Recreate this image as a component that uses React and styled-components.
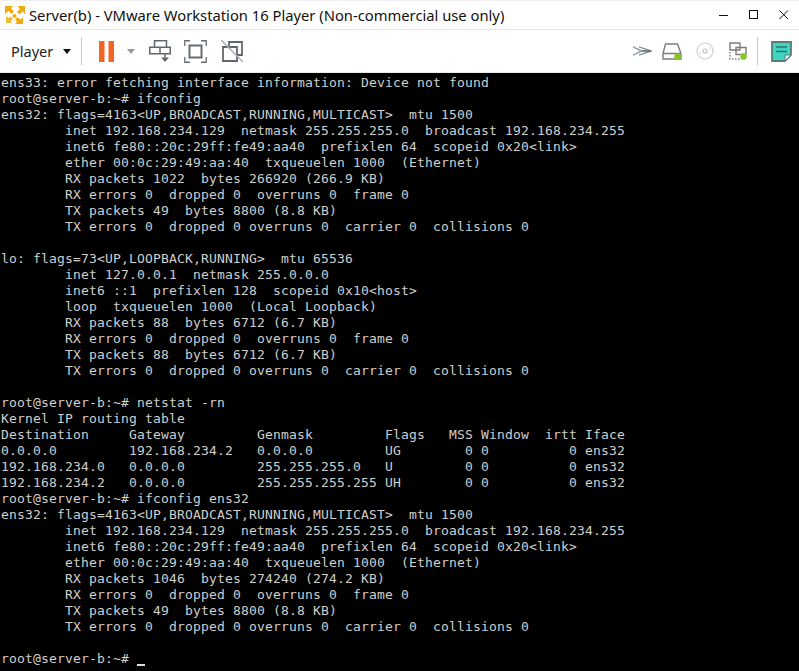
import React from "react";
import styled, { createGlobalStyle } from "styled-components";

const Global = createGlobalStyle`
  html, body { margin: 0; padding: 0; background: #fff; }
  #root { width: 799px; height: 671px; overflow: hidden; }
`;
const Shell = styled.div`
  width: 799px; height: 671px; display: flex; flex-direction: column; background: #fff; overflow: hidden;
`;
const TitleBar = styled.header`
  flex: none; display: flex; align-items: center; padding-left: 5px;
  border-top: 1px solid #f0eeee; box-sizing: border-box; border-bottom: 1px solid #e6e6e6; height: 30px;
`;
const Title = styled.div`
  margin-left: 4px; font: 14.76px/20px "Noto Sans", sans-serif; color: #111; white-space: nowrap; flex: 1;
`;
const WinButtons = styled.div`
  display: flex; align-items: center;
`;
const WinButton = styled.div`
  width: 30px; height: 28px; display: flex; align-items: center; justify-content: center;
`;
const Toolbar = styled.nav`
  height: 43px; flex: none; display: flex; align-items: center; box-sizing: border-box;
  border-bottom: 1px solid #e8e8e8; padding-right: 7px;
`;
const PlayerMenu = styled.div`
  display: flex; align-items: center; padding-left: 11px; width: 81px; box-sizing: border-box;
  font: 14.5px/20px "Noto Sans", sans-serif; color: #222; gap: 10px;
`;
const Caret = styled.span`
  width: 0; height: 0; border-left: 4.5px solid transparent; border-right: 4.5px solid transparent;
  border-top: 5px solid ${p => p.$color};
  margin-left: ${p => p.$left || 0}px;
`;
const Divider = styled.span`
  width: 1px; height: 28px; background: #c8c8c8; flex: none; margin-left: ${p => p.$left || 0}px;
`;
const ToolSlot = styled.div`
  display: flex; align-items: center; flex: none; margin-left: ${p => p.$left || 0}px;
`;
const Spacer = styled.div`flex: 1;`;
const Terminal = styled.pre`
  margin: 0; flex: 1; background: #000; color: #cfcfcf; padding: 2px 0 0 1px;
  font: 13px/16px "DejaVu Sans Mono", monospace; letter-spacing: 0.174px; overflow: hidden;
`;
const Cursor = styled.span`
  display: inline-block; width: 8px; height: 2px; background: #e0e0e0; vertical-align: -3px;
`;

const Logo = () => (
  <svg width="20" height="20" viewBox="0 0 20 20" fill="#eeaa14">
    <path d="M0 1h8L6 3.200l3 3L6.500 9l-3-3L0 9z" />
    <path d="M20 1v8l-2.500-2.500-3 3L12 7l3-3-2.500-3z" />
    <path d="M7 11l2.500-2.500 2.500 2.500-2.500 2.500z" />
    <path d="M18 19h-8l2-2-2-2.500 2.500-2.500 2.500 2.500 3-2z" />
    <path d="M1 11l2.500 2L6 11.500 8 14l-2.500 2 1.500 2H1z" opacity=".85" />
  </svg>
);
const Min = () => <svg width="10" height="10" viewBox="0 0 10 10"><path d="M0 5.500h9" stroke="#111" /></svg>;
const Max = () => <svg width="10" height="10" viewBox="0 0 10 10"><rect x=".5" y=".5" width="8" height="8" fill="none" stroke="#111" /></svg>;
const Close = () => <svg width="10" height="10" viewBox="0 0 10 10"><path d="M.5.500l8.500 8.500M9 .5L.5 9" stroke="#111" fill="none" /></svg>;
const Pause = () => (
  <svg width="15" height="21" viewBox="0 0 15 21"><path d="M0 0h5.500v21H0zM9.500 0H15v21H9.500z" fill="#f26522" /></svg>
);
const SendKeys = () => (
  <svg width="22" height="23" viewBox="0 0 22 23" fill="none" stroke="#5f666d" strokeWidth="1.500">
    <path d="M5.500 .75h12v6.500h-12zM.75 7.250h20.500v6.500H.75zM11 7.250v6.500" />
    <path d="M16 13.750v4" />
    <path d="M12 17.500h8L16 22z" fill="#5f666d" stroke="none" />
  </svg>
);
const FullScreen = () => (
  <svg width="23" height="23" viewBox="0 0 23 23" fill="none" stroke="#666d73">
    <path d="M.75 6V.75H6M17 .75h5.250V6M22.250 17v5.250H17M6 22.250H.75V17" strokeWidth="1.300" />
    <rect x="5.500" y="5.500" width="12" height="12" strokeWidth="2" />
  </svg>
);
const Unity = () => (
  <svg width="22" height="22" viewBox="0 0 22 22" fill="none" stroke="#5f666d" strokeWidth="1.800">
    <path d="M8 7V2h13v13h-5" />
    <path d="M2 7h14v14H2z" />
    <path d="M0 0l22 22" stroke="#a9aeb3" strokeWidth="1.500" />
  </svg>
);
const More = () => (
  <svg width="19" height="10" viewBox="0 0 19 10" fill="none" stroke="#8a949c" strokeWidth="1.400">
    <path d="M0 .8L8.500 5 0 9.200M6 .8L18 5 6 9.200" />
    <path d="M9 5h9" stroke="#5f6b74" strokeWidth="1.600" />
  </svg>
);
const Dot = ({ x, y }) => <circle cx={x} cy={y} r="3.200" fill="#84c91c" stroke="none" />;
const Disk = () => (
  <svg width="20" height="17" viewBox="0 0 20 17" fill="none" stroke="#7d7d7d" strokeWidth="1.400">
    <path d="M3.500 1h12L19 10.500V16H1v-5.500zM1 10.500h18" />
    <Dot x={15.500} y={13.500} />
  </svg>
);
const Disc = () => (
  <svg width="18" height="18" viewBox="0 0 18 18" fill="none" stroke="#cfcfcf" strokeWidth="1.200">
    <circle cx="9" cy="9" r="8" />
    <circle cx="9" cy="9" r="2" stroke="#bdbdbd" />
    <path d="M13 5a6 6 0 0 1 1.500 3M5 13a6 6 0 0 1-1.500-3" stroke="#e0e0e0" />
  </svg>
);
const Network = () => (
  <svg width="18" height="18" viewBox="0 0 18 18" fill="none" stroke="#7d7d7d" strokeWidth="1.400">
    <path d="M1 1h10v7H1zM7 5.500h10v7H7z" />
    <path d="M1 10v7h11" strokeDasharray="1.500 1.500" />
    <Dot x={14.500} y={14.500} />
  </svg>
);
const Note = () => (
  <svg width="21" height="21" viewBox="0 0 21 21">
    <path d="M1 1h19v13l-6 6H1z" fill="#3bd6bd" stroke="#5c7a78" strokeWidth="1.800" />
    <path d="M14 20v-6h6z" fill="#eef6f5" stroke="#5c7a78" strokeWidth="1" />
    <path d="M5 6h11M5 10.500h11" stroke="#37706a" strokeWidth="1.600" />
  </svg>
);

const terminalText = `ens33: error fetching interface information: Device not found
root@server-b:~# ifconfig
ens32: flags=4163<UP,BROADCAST,RUNNING,MULTICAST>  mtu 1500
        inet 192.168.234.129  netmask 255.255.255.0  broadcast 192.168.234.255
        inet6 fe80::20c:29ff:fe49:aa40  prefixlen 64  scopeid 0x20<link>
        ether 00:0c:29:49:aa:40  txqueuelen 1000  (Ethernet)
        RX packets 1022  bytes 266920 (266.9 KB)
        RX errors 0  dropped 0  overruns 0  frame 0
        TX packets 49  bytes 8800 (8.8 KB)
        TX errors 0  dropped 0 overruns 0  carrier 0  collisions 0

lo: flags=73<UP,LOOPBACK,RUNNING>  mtu 65536
        inet 127.0.0.1  netmask 255.0.0.0
        inet6 ::1  prefixlen 128  scopeid 0x10<host>
        loop  txqueuelen 1000  (Local Loopback)
        RX packets 88  bytes 6712 (6.7 KB)
        RX errors 0  dropped 0  overruns 0  frame 0
        TX packets 88  bytes 6712 (6.7 KB)
        TX errors 0  dropped 0 overruns 0  carrier 0  collisions 0

root@server-b:~# netstat -rn
Kernel IP routing table
Destination     Gateway         Genmask         Flags   MSS Window  irtt Iface
0.0.0.0         192.168.234.2   0.0.0.0         UG        0 0          0 ens32
192.168.234.0   0.0.0.0         255.255.255.0   U         0 0          0 ens32
192.168.234.2   0.0.0.0         255.255.255.255 UH        0 0          0 ens32
root@server-b:~# ifconfig ens32
ens32: flags=4163<UP,BROADCAST,RUNNING,MULTICAST>  mtu 1500
        inet 192.168.234.129  netmask 255.255.255.0  broadcast 192.168.234.255
        inet6 fe80::20c:29ff:fe49:aa40  prefixlen 64  scopeid 0x20<link>
        ether 00:0c:29:49:aa:40  txqueuelen 1000  (Ethernet)
        RX packets 1046  bytes 274240 (274.2 KB)
        RX errors 0  dropped 0  overruns 0  frame 0
        TX packets 49  bytes 8800 (8.8 KB)
        TX errors 0  dropped 0 overruns 0  carrier 0  collisions 0

root@server-b:~# `;

export default function App() {
  return (
    <Shell>
      <Global />
      <TitleBar>
        <Logo />
        <Title>Server(b) - VMware Workstation 16 Player (Non-commercial use only)</Title>
        <WinButtons>
          <WinButton><Min /></WinButton>
          <WinButton><Max /></WinButton>
          <WinButton><Close /></WinButton>
        </WinButtons>
      </TitleBar>
      <Toolbar>
        <PlayerMenu>Player <Caret $color="#111" /></PlayerMenu>
        <Divider />
        <ToolSlot $left={17}><Pause /></ToolSlot>
        <Caret $color="#999" $left={13} />
        <ToolSlot $left={14}><SendKeys /></ToolSlot>
        <ToolSlot $left={13}><FullScreen /></ToolSlot>
        <ToolSlot $left={14}><Unity /></ToolSlot>
        <Spacer />
        <ToolSlot><More /></ToolSlot>
        <ToolSlot $left={10}><Disk /></ToolSlot>
        <ToolSlot $left={14}><Disc /></ToolSlot>
        <ToolSlot $left={15}><Network /></ToolSlot>
        <Divider $left={10} />
        <ToolSlot $left={13}><Note /></ToolSlot>
      </Toolbar>
      <Terminal>{terminalText}<Cursor /></Terminal>
    </Shell>
  );
}
